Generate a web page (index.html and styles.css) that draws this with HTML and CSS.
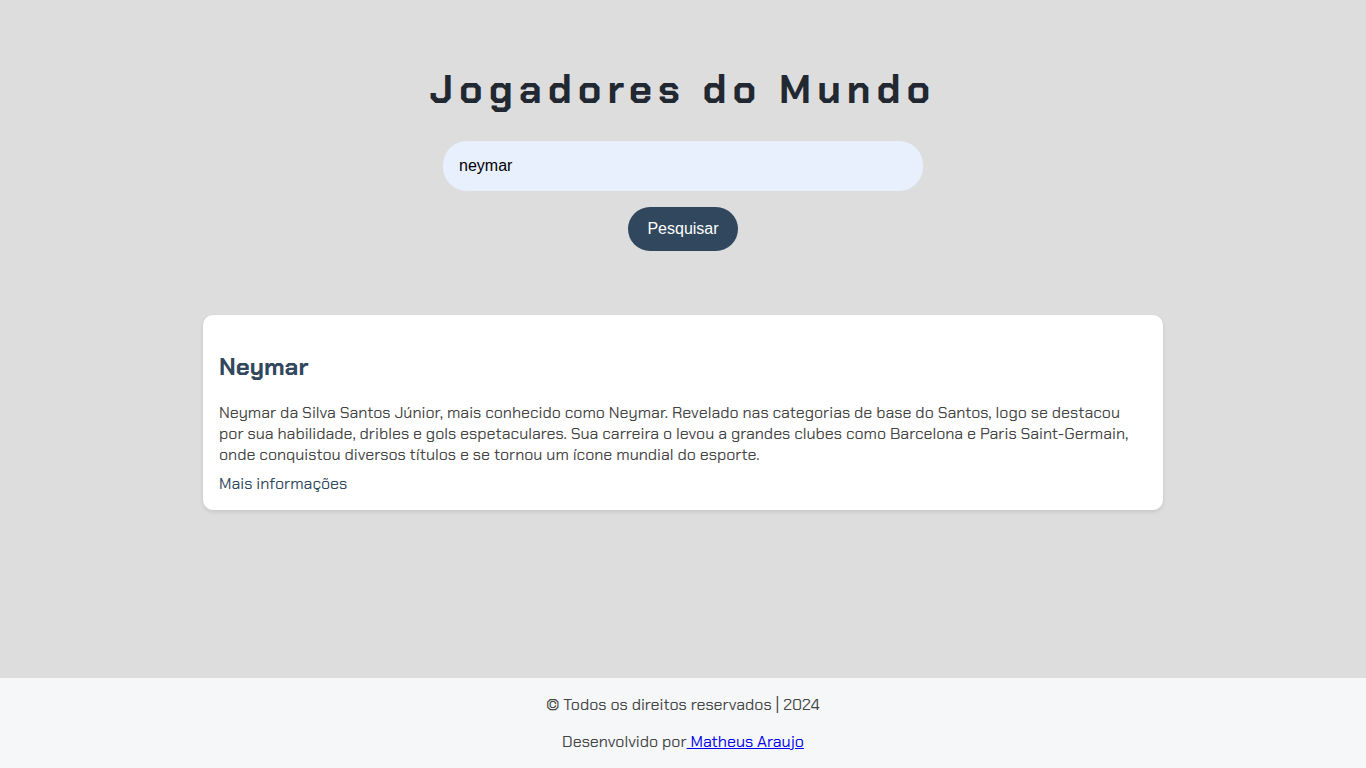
FILE: index.html
```html
<!DOCTYPE html>
<html lang="pt-BR">
<head>
<meta charset="UTF-8">
<meta name="viewport" content="width=device-width, initial-scale=1.0">
<title>Jogadores do Mundo</title>
<link rel="stylesheet" href="styles.css">
</head>
<body>
<header class="header">
  <h1 class="title">Jogadores do Mundo</h1>
</header>
<main class="main">
  <form class="search" role="search">
    <input class="search-input" type="text" value="neymar" aria-label="Pesquisar jogador">
    <button class="search-button" type="button">Pesquisar</button>
  </form>
  <section class="results">
    <article class="card">
      <h2 class="card-title">Neymar</h2>
      <p class="card-text">Neymar da Silva Santos Júnior, mais conhecido como Neymar. Revelado nas categorias de base do Santos, logo se destacou por sua habilidade, dribles e gols espetaculares. Sua carreira o levou a grandes clubes como Barcelona e Paris Saint-Germain, onde conquistou diversos títulos e se tornou um ícone mundial do esporte.</p>
      <a class="card-link" href="#">Mais informações</a>
    </article>
  </section>
</main>
<footer class="footer">
  <p class="footer-text">© Todos os direitos reservados | 2024</p>
  <p class="footer-text">Desenvolvido por<a class="footer-link" href="#"> Matheus Araujo</a></p>
</footer>
</body>
</html>
```
FILE: styles.css
```css
* {
  box-sizing: border-box;
}

body {
  display: flex;
  flex-direction: column;
  min-height: 100vh;
  margin: 0;
  background: #ddd;
  color: #444;
  font-family: "Chakra Petch", Roboto, sans-serif;
  font-size: 16px;
  line-height: 21px;
}

.header {
  padding: 64px 16px 27px;
  text-align: center;
}

.title {
  margin: 0;
  color: #222831;
  font-size: 40px;
  line-height: 50px;
  letter-spacing: 6px;
}

.main {
  flex: 1;
  padding: 0 16px;
}

.search {
  display: flex;
  flex-direction: column;
  align-items: center;
  gap: 16px;
  margin-bottom: 64px;
}

.search-input {
  width: 100%;
  max-width: 480px;
  height: 50px;
  padding: 0 16px;
  border: 0;
  border-radius: 24px;
  background: #e8f0fe;
  color: #000;
  font: 16px "Liberation Sans", sans-serif;
}

.search-button {
  width: 110px;
  height: 44px;
  padding: 0;
  border: 0;
  border-radius: 22px;
  background: #30475e;
  color: #fff;
  font: 16px "Liberation Sans", sans-serif;
}

.card {
  max-width: 960px;
  margin: 0 auto;
  padding: 36px 16px 16px;
  border-radius: 10px;
  background: #fff;
  box-shadow: 0 2px 4px rgba(0, 0, 0, 0.1);
}

.card-title {
  margin: 0 0 20px;
  color: #30475e;
  font-size: 24px;
  line-height: 31px;
}

.card-text {
  margin: 0 0 8px;
}

.card-link {
  display: inline-block;
  color: #30475e;
  text-decoration: none;
}

.footer {
  padding: 16px;
  background: #f5f7f9;
  text-align: center;
}

.footer-text {
  margin: 0;
}

.footer-text + .footer-text {
  margin-top: 16px;
}

.footer-link {
  color: #00e;
}
```
